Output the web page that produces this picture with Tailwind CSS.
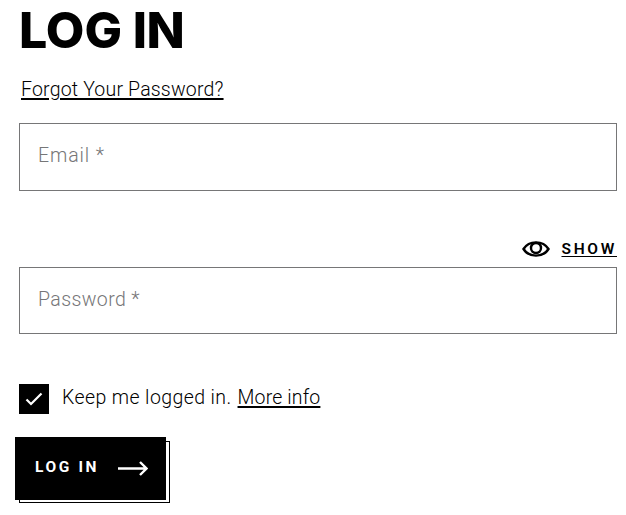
<!DOCTYPE html>
<html lang="en">
<head>
<meta charset="utf-8">
<title>Log in</title>
<script src="https://cdn.jsdelivr.net/npm/@tailwindcss/browser@4"></script>
</head>
<body class="bg-white text-black overflow-hidden font-['Roboto',sans-serif] font-light text-[19.5px] leading-6">
<form class="flex flex-col w-[598px] ml-[19px]">
  <h1 class="h-[60px] leading-[60px] text-[50px] font-extrabold font-['Inter',sans-serif] tracking-[0.1px] whitespace-nowrap"><span class="tracking-[-1.5px]">L</span>OG<span class="tracking-[-0.5px]"> IN</span></h1>
  <a class="mt-[18px] ml-[2px] h-[24px] self-start whitespace-nowrap tracking-[0.18px] underline decoration-2 underline-offset-[2px]">Forgot Your Password?</a>
  <div class="mt-[21px] h-[68px] border border-[#767677] pl-[18px] pt-[20px] text-[#767677] tracking-[0.9px]">Email *</div>
  <div class="mt-[46px] h-[24px] flex justify-end items-center gap-[10px]">
    <svg class="w-[30px] h-[20px]" viewBox="0 0 30 20" fill="none" stroke="#000" stroke-width="2.400"><path d="M2.500 10C8 1.200 22 1.200 27.500 10C22 18.800 8 18.800 2.500 10Z"/><circle cx="15" cy="9" r="5"/></svg>
    <span class="text-[15.5px] font-semibold tracking-[2.7px] underline decoration-1 underline-offset-[2px]">SHOW</span>
  </div>
  <div class="mt-[6px] h-[67px] border border-[#767677] pl-[18px] pt-[20px] text-[#767677] tracking-[0.4px]">Password *</div>
  <div class="mt-[50px] h-[30px] flex">
    <span class="size-[30px] bg-black"><svg class="size-[30px]" viewBox="0 0 30 30" fill="none" stroke="#fff" stroke-width="2.200"><path d="M7.500 15.500L12 20L22.500 9.500"/></svg></span>
    <span class="ml-[13px] pt-[2px] whitespace-nowrap tracking-[0.4px]">Keep me logged in.</span>
    <a class="ml-[6px] pt-[2px] whitespace-nowrap tracking-[0.15px] underline decoration-2 underline-offset-[2px]">More info</a>
  </div>
  <div class="mt-[27px] w-[151px] h-[62px] border border-black">
    <button type="button" class="relative -left-[5px] -top-[5px] w-[151px] h-[63px] bg-black text-white flex items-center pl-[20px]">
      <span class="text-[15.5px] font-bold tracking-[2.6px] w-[83px] text-left whitespace-nowrap relative -top-[2px]">LOG IN</span>
      <svg class="w-[30px] h-[16px] shrink-0" viewBox="0 0 30 16" fill="none" stroke="#fff" stroke-width="2.400"><path d="M0 7.500H28.500M22 1L28.500 7.500L22 14"/></svg>
    </button>
  </div>
</form>
</body>
</html>
